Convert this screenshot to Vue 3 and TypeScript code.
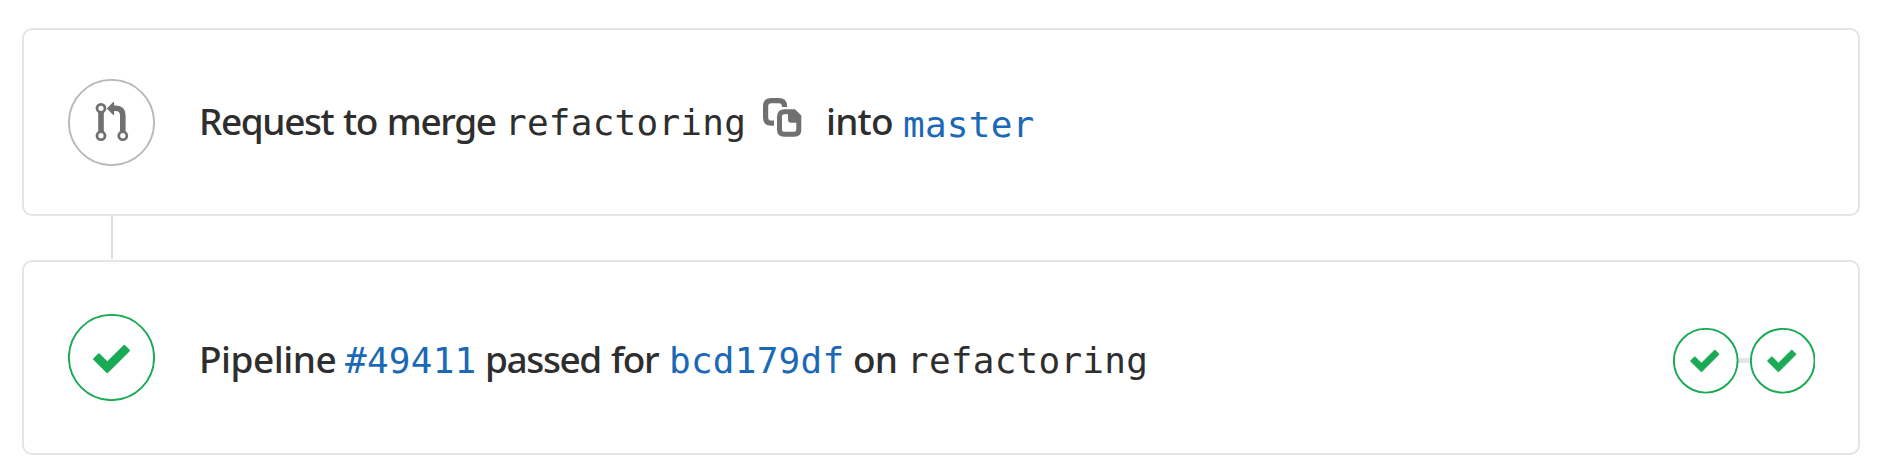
<script setup lang="ts">
interface Stage {
  id: number
  label: string
}

const branch = 'refactoring'
const target = 'master'
const pipeline = '#49411'
const commit = 'bcd179df'
const stages: Stage[] = [
  { id: 1, label: 'Build: passed' },
  { id: 2, label: 'Test: passed' },
]
const check =
  'M1.1 13.1 5.2 9.1Q5.9 8.5 6.6 9.1L14.3 16.7 30.6.6Q31.3 0 32 .6L36.4 5Q37 5.7 36.4 6.4L15.1 27.6Q14.3 28.4 13.5 27.6L.6 15Q0 14.2.6 13.6Z'
</script>

<template>
  <main class="widget">
    <section class="card request">
      <svg class="badge neutral" viewBox="0 0 87 87" aria-hidden="true">
        <circle class="ring" cx="43.5" cy="43.5" r="42.6" />
        <g class="lines">
          <path class="stem" d="M33 32V54M54.8 54V36.5Q54.8 29.3 47.5 29.3H44" />
          <circle cx="33" cy="29.3" r="4" />
          <circle cx="33" cy="56.7" r="4" />
          <circle cx="54.8" cy="56.7" r="4" />
        </g>
        <path class="solid" d="M38.8 29.6 45 23.3Q46.1 22.5 46.1 23.9V35.2Q46.1 36.6 45 35.8Z" />
      </svg>
      <p class="line">
        <span class="word request-words">Request to merge</span>
        <code class="mono source">{{ branch }}</code>
        <button class="copy" type="button" aria-label="Copy branch name">
          <svg viewBox="0 0 39 39" aria-hidden="true">
            <path class="back" d="M21.5 9V8.3Q21.5 2.6 15.8 2.6H8.3Q2.6 2.6 2.6 8.3V19.5Q2.6 25.2 8.3 25.2H11" />
            <path
              class="front"
              fill-rule="evenodd"
              d="M21.5 11.2H32L38.3 17.6V31.8Q38.3 38.8 31.3 38.8H21.2Q14 38.8 14 31.8V18.7Q14 11.2 21.5 11.2ZM21 16.3Q19 16.3 19 18.3V31.8Q19 33.7 21 33.7H31.3Q33.3 33.7 33.3 31.8V24.8H28.3Q25 24.8 25 21.5V16.3Z"
            />
          </svg>
        </button>
        <span class="word into">into</span>
        <a class="mono link target">{{ target }}</a>
      </p>
    </section>

    <div class="connector"></div>

    <section class="card pipeline">
      <svg class="badge success" viewBox="0 0 87 87" aria-hidden="true">
        <circle class="ring" cx="43.5" cy="43.5" r="42.6" />
        <path class="solid" transform="translate(25 30.8)" :d="check" />
      </svg>
      <p class="line">
        <span class="word pipeline-word">Pipeline</span>
        <a class="mono link number">{{ pipeline }}</a>
        <span class="word passed">passed for</span>
        <a class="mono link commit">{{ commit }}</a>
        <span class="word on">on</span>
        <code class="mono">{{ branch }}</code>
      </p>
      <div class="stages">
        <svg v-for="stage in stages" :key="stage.id" class="stage success" viewBox="0 0 65 65" role="img" :aria-label="stage.label">
          <circle class="ring" cx="32.5" cy="32.5" r="31.6" />
          <path class="solid" transform="translate(17.1 21.6) scale(.78)" :d="check" />
        </svg>
      </div>
    </section>
  </main>
</template>

<style>
body {
  background: #fff;
}
</style>

<style scoped>
.widget {
  box-sizing: border-box;
  width: 1884px;
  height: 475px;
  padding: 28px 24px 0 22px;
  color: #2e2e2e;
}
.card {
  box-sizing: border-box;
  display: flex;
  align-items: flex-start;
  border: 2px solid #e5e5e5;
  border-radius: 10px;
  padding: 0 43px 0 44px;
}
.request {
  height: 188px;
}
.pipeline {
  height: 195px;
}
.connector {
  width: 2px;
  height: 43px;
  margin: 0 0 1px 89px;
  background: #dfdfdf;
}
.badge {
  flex: none;
  width: 87px;
  height: 87px;
  margin-top: 49px;
}
.pipeline .badge {
  margin-top: 52px;
}
.ring {
  fill: #fff;
  stroke-width: 1.9;
}
.neutral .ring {
  stroke: #b9b9b9;
}
.neutral .solid {
  fill: #707070;
}
.lines {
  fill: #fff;
  stroke: #707070;
  stroke-width: 2.8;
}
.lines .stem {
  fill: none;
  stroke-width: 5.6;
}
.success .ring {
  stroke: #1aaa55;
}
.success .solid {
  fill: #1aaa55;
  stroke: #1aaa55;
  stroke-width: 0.6;
}
.line {
  display: flex;
  align-items: baseline;
  height: 60px;
  margin: 61px 0 0 44px;
  font: 500 37px/60px "Noto Sans", sans-serif;
  white-space: nowrap;
}
.pipeline .line {
  margin-top: 67px;
}
.word {
  flex: none;
  letter-spacing: -0.8px;
}
.request-words {
  width: 306px;
  letter-spacing: -1.4px;
  word-spacing: 1.5px;
}
.mono {
  font: 400 36px/60px "DejaVu Sans Mono", monospace;
  letter-spacing: 0.24px;
}
.source {
  width: 258px;
}
.copy {
  align-self: flex-start;
  width: 39px;
  height: 39px;
  margin: 7px 24px 0 0;
  padding: 0;
  border: 0;
  background: none;
}
.copy svg {
  display: block;
  width: 39px;
  height: 39px;
}
.back {
  fill: none;
  stroke: #707070;
  stroke-width: 5.2;
}
.front {
  fill: #707070;
}
.into {
  width: 77px;
}
.link {
  color: #1b69b6;
}
.target {
  position: relative;
  top: 2px;
}
.pipeline-word {
  width: 146px;
  letter-spacing: -0.5px;
}
.number {
  width: 140px;
}
.passed {
  width: 184px;
  letter-spacing: -1.4px;
  word-spacing: 2px;
}
.commit {
  width: 184px;
}
.on {
  width: 54px;
}
.stages {
  display: flex;
  gap: 11px;
  margin: 66px 0 0 auto;
  background: linear-gradient(#e5e5e5, #e5e5e5) center / 40px 5px no-repeat;
}
.stage {
  width: 65.5px;
  height: 65.5px;
}
</style>
